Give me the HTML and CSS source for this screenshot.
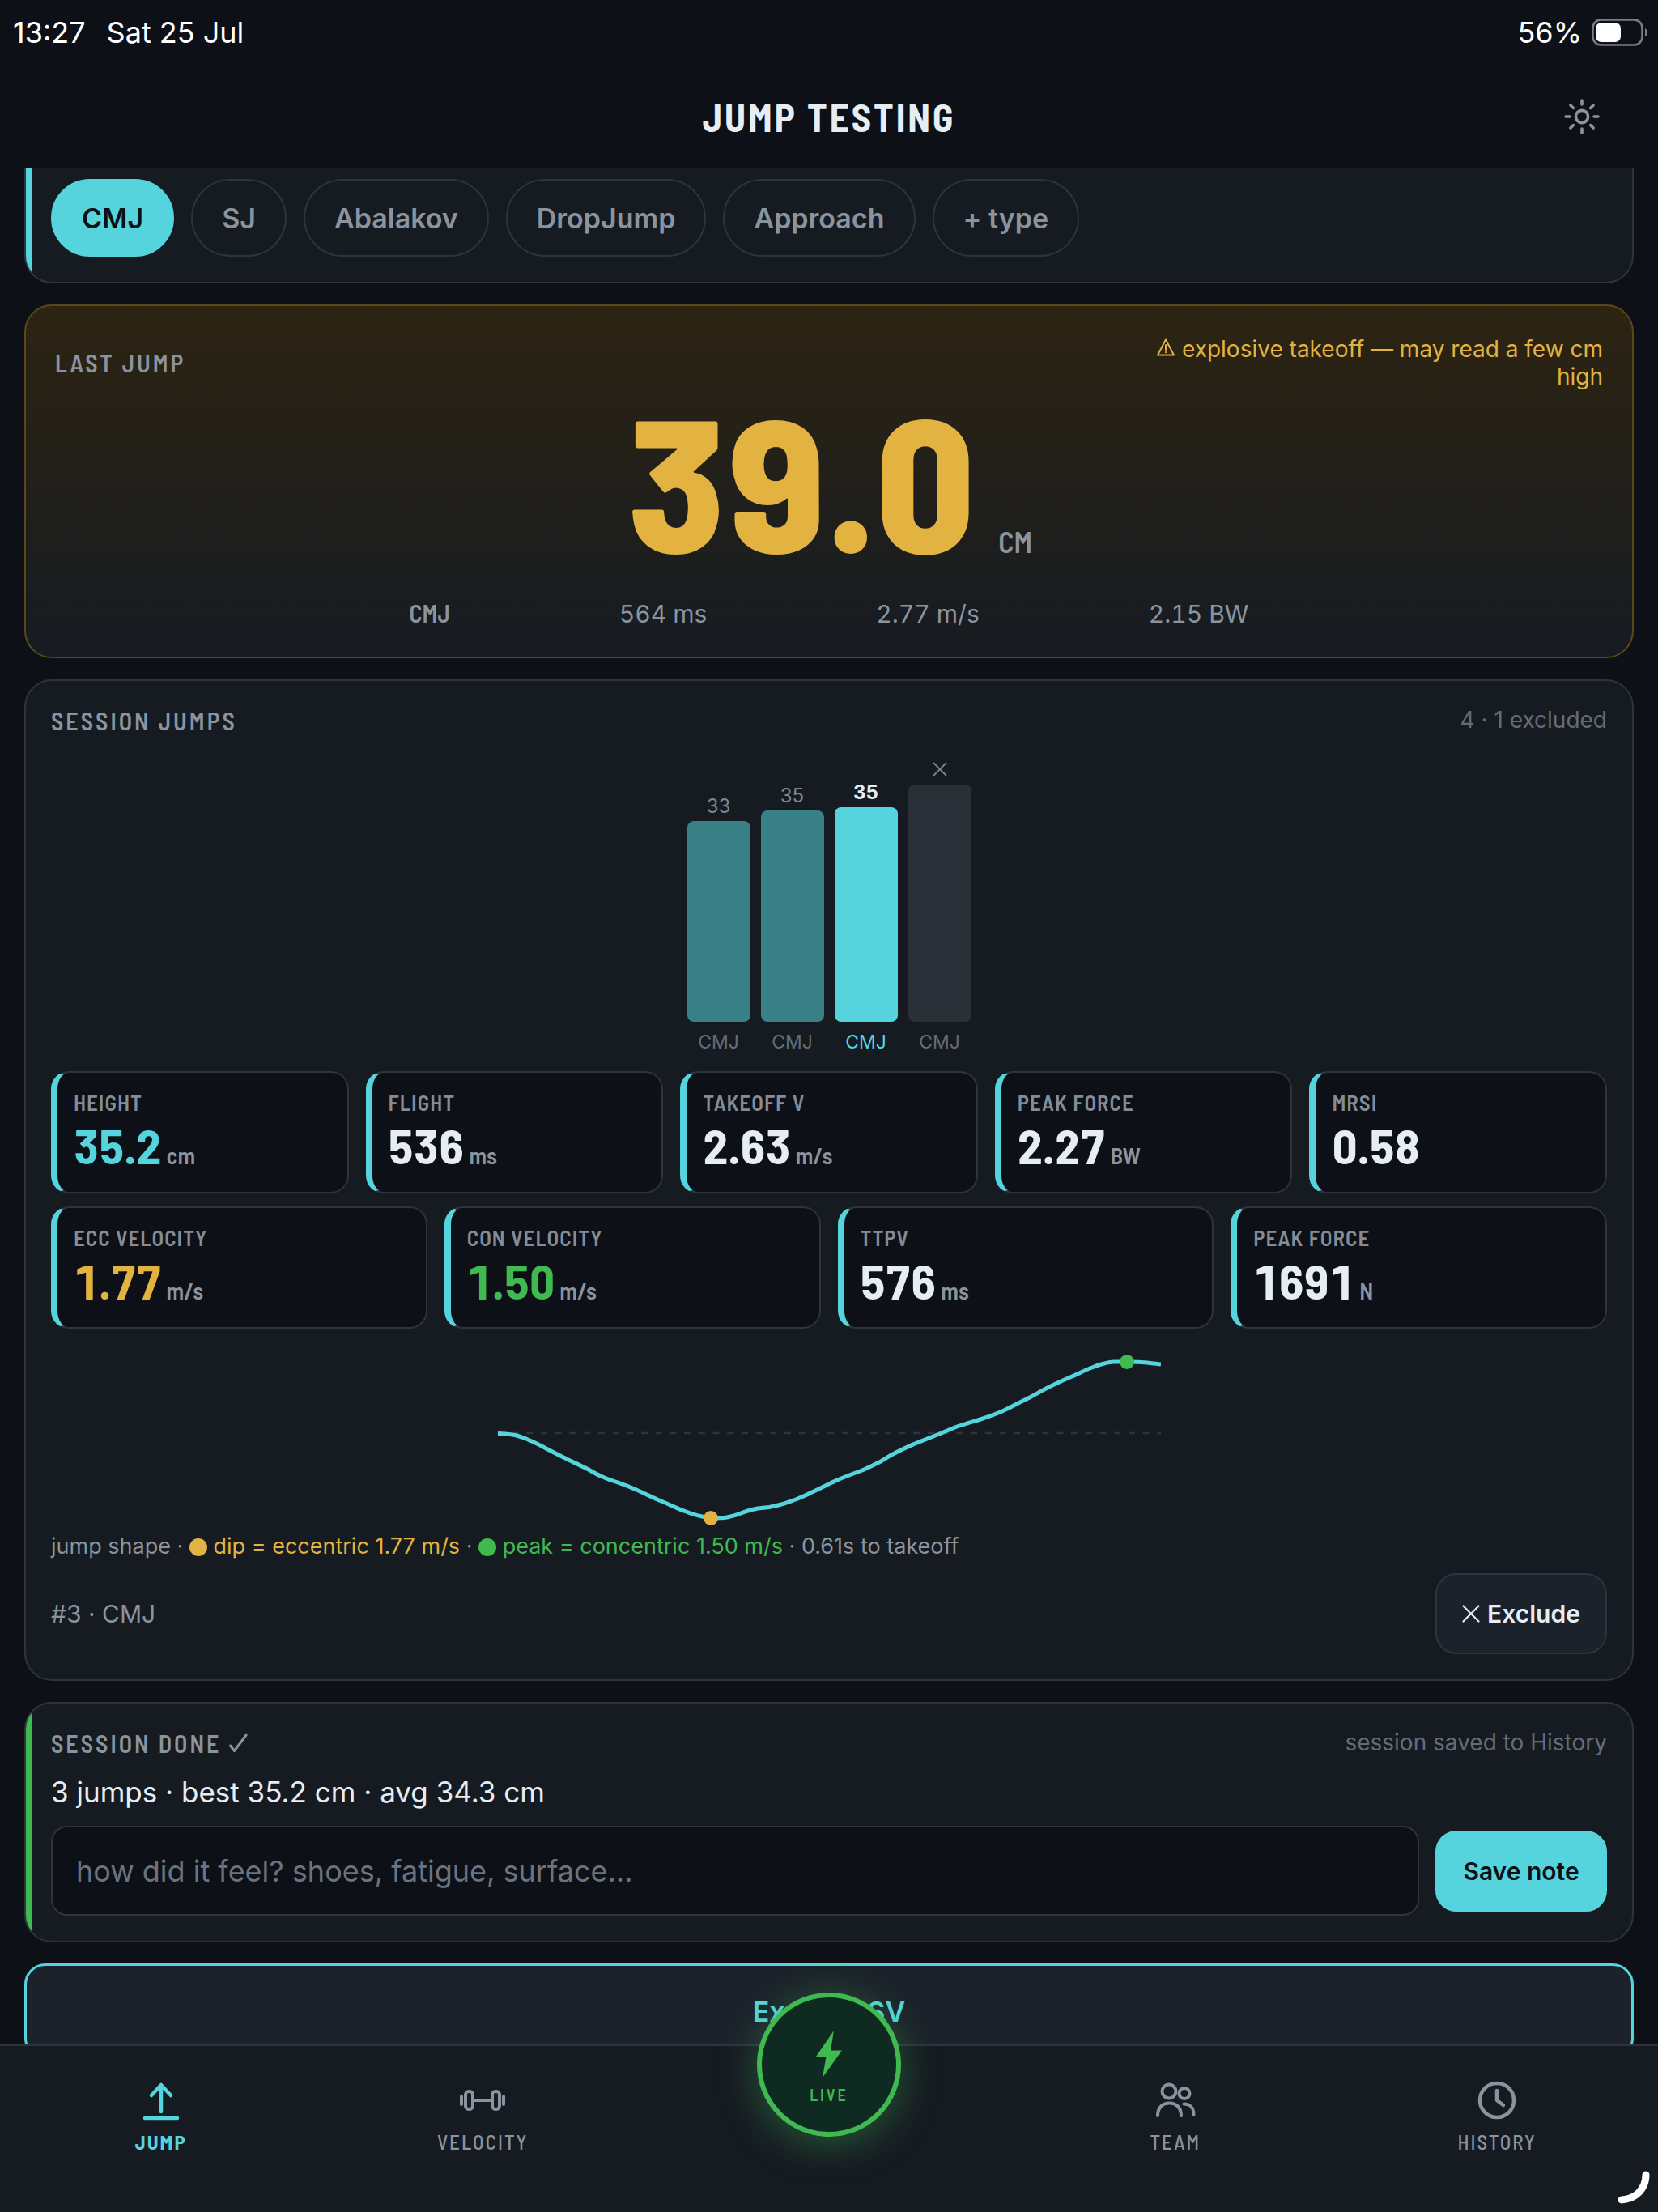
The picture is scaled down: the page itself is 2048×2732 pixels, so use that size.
FILE: index.html
```html
<!DOCTYPE html>
<html lang="en">
<head>
    <meta charset="UTF-8">
    <meta name="viewport" content="width=device-width, initial-scale=1.0">
    <title>Jump Testing</title>
    <link rel="stylesheet" href="styles.css">
</head>
<body>
    <header class="header">
        <div class="status">
            <span>13:27</span>
            <span>Sat 25 Jul</span>
            <span class="battery-text">56%</span>
            <svg class="battery" viewBox="0 0 70 34" aria-hidden="true">
                <rect x="1.5" y="1.5" width="61" height="31" rx="10" fill="none" stroke="#7b7e82" stroke-width="2.5"/>
                <rect x="5" y="5" width="31" height="24" rx="7" fill="#fff"/>
                <path d="M66 12c4 2 4 8 0 10z" fill="#7b7e82"/>
            </svg>
        </div>
        <div class="titlebar">
            <h1>JUMP TESTING</h1>
            <button class="theme" aria-label="Theme">
                <svg viewBox="0 0 44 44" fill="none" stroke="#8b949e" stroke-width="3.6" stroke-linecap="round">
                    <circle cx="22" cy="22" r="7.6"/>
                    <path d="M22 2v5M22 37v5M2 22h5M37 22h5M7.9 7.9l3.5 3.5M32.6 32.6l3.5 3.5M7.9 36.1l3.5-3.5M32.6 11.4l3.5-3.5"/>
                </svg>
            </button>
        </div>
    </header>

    <main class="content">
        <section class="card types">
            <button class="pill active">CMJ</button>
            <button class="pill">SJ</button>
            <button class="pill">Abalakov</button>
            <button class="pill">DropJump</button>
            <button class="pill">Approach</button>
            <button class="pill">+ type</button>
        </section>

        <section class="card last">
            <div class="last-head">
                <h2>LAST JUMP</h2>
                <p class="warn">
                    <svg class="warn-icon" viewBox="0 0 24 24" fill="none" stroke="#e3b341" stroke-width="2" stroke-linejoin="round" stroke-linecap="round"><path d="M12 2.5L22 21.5H2zM12 9v6M12 18v.3"/></svg>
                    explosive takeoff — may read a few cm high
                </p>
            </div>
            <div class="big"><span class="big-num">39.0</span><span class="big-unit">CM</span></div>
            <div class="last-stats">
                <b>CMJ</b>
                <span>564 ms</span>
                <span>2.77 m/s</span>
                <span>2.15 BW</span>
            </div>
        </section>

        <section class="card">
            <div class="card-head">
                <h2>SESSION JUMPS</h2>
                <span class="note">4 · 1 excluded</span>
            </div>

            <div class="bars">
                <div class="bar-col"><span class="bar-val">33</span><div class="bar" style="height:248px"></div><span class="bar-lbl">CMJ</span></div>
                <div class="bar-col"><span class="bar-val">35</span><div class="bar" style="height:261px"></div><span class="bar-lbl">CMJ</span></div>
                <div class="bar-col selected"><span class="bar-val">35</span><div class="bar" style="height:265px"></div><span class="bar-lbl">CMJ</span></div>
                <div class="bar-col excluded">
                    <span class="bar-val"><svg class="x-small" viewBox="0 0 18 18" fill="none" stroke="#7d8590" stroke-width="1.8" stroke-linecap="round"><path d="M1.5 1.5l15 15M16.5 1.5l-15 15"/></svg></span>
                    <div class="bar" style="height:293px"></div><span class="bar-lbl">CMJ</span>
                </div>
            </div>

            <div class="tiles five">
                <div class="tile"><div class="tile-lbl">HEIGHT</div><div class="tile-val cyan">35.2<small>cm</small></div></div>
                <div class="tile"><div class="tile-lbl">FLIGHT</div><div class="tile-val">536<small>ms</small></div></div>
                <div class="tile"><div class="tile-lbl">TAKEOFF V</div><div class="tile-val">2.63<small>m/s</small></div></div>
                <div class="tile"><div class="tile-lbl">PEAK FORCE</div><div class="tile-val">2.27<small>BW</small></div></div>
                <div class="tile"><div class="tile-lbl">MRSI</div><div class="tile-val">0.58</div></div>
            </div>
            <div class="tiles four">
                <div class="tile"><div class="tile-lbl">ECC VELOCITY</div><div class="tile-val gold">1.77<small>m/s</small></div></div>
                <div class="tile"><div class="tile-lbl">CON VELOCITY</div><div class="tile-val green">1.50<small>m/s</small></div></div>
                <div class="tile"><div class="tile-lbl">TTPV</div><div class="tile-val">576<small>ms</small></div></div>
                <div class="tile"><div class="tile-lbl">PEAK FORCE</div><div class="tile-val">1691<small>N</small></div></div>
            </div>

            <svg class="curve" viewBox="0 0 820 224" fill="none">
                <path d="M1 108H820" stroke="#2d3440" stroke-width="2.5" stroke-dasharray="8 9.7"/>
                <path d="M1 108.5C8 108.5 13 109 19 110C25 111 31 113 37 115.5C43 118 49 121 55 124C64 129 72 133 81 137.5C92 143 103 148 113 153C118 156 123 159 128 161C134 164 140 166 146 168C155 171 163 174 172 178C181 182 189 186 198 190C208 194 218 199 228 203C236 206 243 209 251 210.5C256 212 260 212.5 264 212.5C270 213 275 213 281 212.5C286 212 290 210.5 294 209.5C299 208 303 206 307 205C312 203 317 202 322 201C327 200.5 332 200 336 199.5C341 198.5 346 197.5 351 196C357 194.5 363 192 369 190C375 187.5 381 185 387 182C398 177 407 172 418 167C429 162 440 158 451 154C459 150.5 466 147 474 143C479 140 484 136.5 489 134C498 129 506 125.5 515 121.5C525 117.5 535 113.5 545 109.5C554 106 562 102 571 99C580 96 589 93.5 597 91C606 88 615 85 624 81C635 76 645 70 656 65C666 60 675 54 685 49.5C693 45.5 701 42 709 38.5C718 35 726 30 735 27C740 25 745 23 750 22C754 21 758 20 762 20C767 20 772 20 778 20C785 20 792 20 800 20.7C807 21.5 813 22 820 23" stroke="#56d4dd" stroke-width="5" stroke-linejoin="round"/>
                <circle cx="264" cy="213" r="9" fill="#e3b341"/>
                <circle cx="778" cy="20" r="9" fill="#3fb950"/>
            </svg>

            <p class="legend">jump shape · <span class="gold"><i class="dot"></i> dip = eccentric 1.77 m/s</span> · <span class="green"><i class="dot"></i> peak = concentric 1.50 m/s</span> · 0.61s to takeoff</p>

            <div class="row">
                <span class="jump-id">#3 · CMJ</span>
                <button class="btn"><svg class="x-btn" viewBox="0 0 22 22" fill="none" stroke="#e6edf3" stroke-width="2.2" stroke-linecap="round"><path d="M1.5 1.5l19 19M20.5 1.5l-19 19"/></svg>Exclude</button>
            </div>
        </section>

        <section class="card done">
            <div class="card-head">
                <h2>SESSION DONE <svg class="check" viewBox="0 0 24 24" fill="none" stroke="#8b949e" stroke-width="3" stroke-linecap="round" stroke-linejoin="round"><path d="M2.5 15l5 6.5L22 2"/></svg></h2>
                <span class="note">session saved to History</span>
            </div>
            <p class="summary">3 jumps · best 35.2 cm · avg 34.3 cm</p>
            <div class="row note-row">
                <input class="note-input" type="text" aria-label="Session note" placeholder="how did it feel? shoes, fatigue, surface...">
                <button class="btn primary">Save note</button>
            </div>
        </section>

        <button class="export">Export CSV</button>
    </main>

    <nav class="nav">
        <a class="tab current" href="#jump">
            <svg viewBox="0 0 56 56" fill="none" stroke="currentColor" stroke-width="4.5" stroke-linecap="round" stroke-linejoin="round"><path d="M28 42V10M16 22L28 9l12 13M8 50h40"/></svg>
            JUMP
        </a>
        <a class="tab" href="#velocity">
            <svg viewBox="0 0 56 56" fill="none" stroke="currentColor" stroke-width="4" stroke-linecap="round"><rect x="7" y="17" width="9" height="22" rx="4"/><rect x="40" y="17" width="9" height="22" rx="4"/><path d="M18 28h20M2 23v10M54 23v10"/></svg>
            VELOCITY
        </a>
        <div class="live-slot">
            <button class="live">
                <svg viewBox="0 0 32 58" fill="#3fb950"><path d="M22 0L0 32h12.5L8 58l24-33.5H18z"/></svg>
                LIVE
            </button>
        </div>
        <a class="tab" href="#team">
            <svg viewBox="0 0 56 56" fill="none" stroke="currentColor" stroke-width="4" stroke-linecap="round"><circle cx="20" cy="17" r="8.5"/><circle cx="39" cy="19.5" r="6.5"/><path d="M6 47c0-10 6-15.5 14.5-15.5S35 37 35 47M38.5 32.5c7 0 12 4.5 12 13"/></svg>
            TEAM
        </a>
        <a class="tab" href="#history">
            <svg viewBox="0 0 56 56" fill="none" stroke="currentColor" stroke-width="4.5" stroke-linecap="round" stroke-linejoin="round"><circle cx="28" cy="28" r="21"/><path d="M28 16v12l8 6"/></svg>
            HISTORY
        </a>
        <svg class="corner" viewBox="0 0 42 42" fill="none" stroke="#fff" stroke-width="9" stroke-linecap="round"><path d="M36 5C36 22 24 35 6 36"/></svg>
    </nav>
</body>
</html>
```
FILE: styles.css
```css
:root {
    --bg: #0d1117;
    --card: #161b22;
    --line: #2d343f;
    --text: #e6edf3;
    --muted: #8b949e;
    --dim: #646c77;
    --cyan: #56d4dd;
    --gold: #e3b341;
    --green: #3fb950;
    --cond: "Barlow Semi Condensed", "Barlow Condensed", "Roboto Condensed", sans-serif;
}
* {
    box-sizing: border-box;
    margin: 0;
    padding: 0;
}
body {
    display: flex;
    flex-direction: column;
    height: 100vh;
    overflow: hidden;
    background: var(--bg);
    color: var(--text);
    font-family: Inter, sans-serif;
    font-size: 30px;
    line-height: 36px;
}
button {
    font-family: inherit;
    cursor: pointer;
}
svg {
    flex: none;
}

/* header */
.header {
    flex: none;
    padding-bottom: 35px;
}
.status {
    display: flex;
    align-items: center;
    gap: 26px;
    padding: 18px 12px 0 16px;
    color: #fff;
    font-size: 36px;
    line-height: 44px;
}
.battery-text {
    margin-left: auto;
}
.battery {
    width: 70px;
    height: 34px;
    margin-left: -14px;
}
.titlebar {
    display: grid;
    grid-template-columns: 1fr auto 1fr;
    align-items: center;
    padding: 54px 72px 0;
}
h1 {
    grid-column: 2;
    font-family: var(--cond);
    font-size: 47px;
    font-weight: 700;
    line-height: 56px;
    letter-spacing: 3px;
}
.theme {
    justify-self: end;
    height: 44px;
    border: 0;
    background: none;
}
.theme svg {
    display: block;
    width: 44px;
    height: 44px;
}

/* cards */
.content {
    flex: 1;
    display: flex;
    flex-direction: column;
    gap: 26px;
    min-height: 0;
    overflow: hidden;
    padding: 0 30px;
}
.card {
    flex: none;
    padding: 31px;
    background: var(--card);
    border: 2px solid var(--line);
    border-radius: 34px;
}
h2 {
    font-family: var(--cond);
    font-size: 30px;
    font-weight: 600;
    line-height: 36px;
    letter-spacing: 3px;
    color: var(--muted);
}
.card-head,
.last-head,
.row {
    display: flex;
    justify-content: space-between;
}
.note {
    color: var(--dim);
    font-size: 28px;
    line-height: 34px;
}
.types {
    display: flex;
    gap: 21px;
    padding-top: 14px;
    border-top: 0;
    border-radius: 0 0 34px 34px;
    background: linear-gradient(90deg, var(--cyan) 8px, var(--card) 8px);
}
.pill {
    height: 96px;
    padding: 0 36px;
    border: 2px solid var(--line);
    border-radius: 48px;
    background: none;
    color: var(--muted);
    font-size: 34px;
    font-weight: 600;
}
.pill.active {
    background: var(--cyan);
    border-color: var(--cyan);
    color: var(--bg);
}

/* last jump */
.last {
    padding: 36px 36px 35px;
    background: linear-gradient(#2d2412, #161b22);
    border-color: #5c4718;
}
.last-head {
    align-items: center;
}
.warn {
    max-width: 30%;
    color: var(--gold);
    font-size: 28px;
    line-height: 34px;
    text-align: right;
}
.warn-icon {
    width: 24px;
    height: 24px;
}
.big {
    display: flex;
    justify-content: center;
    align-items: baseline;
    gap: 28px;
    margin-top: 2px;
    font-family: var(--cond);
}
.big-num {
    color: var(--gold);
    font-size: 233px;
    font-weight: 800;
    font-variant-numeric: tabular-nums;
    line-height: 212px;
}
.big-unit {
    color: var(--muted);
    font-size: 36px;
    font-weight: 600;
    line-height: 40px;
}
.last-stats {
    display: flex;
    justify-content: center;
    align-items: baseline;
    gap: 209px;
    margin-top: 43px;
    color: var(--muted);
    font-variant-numeric: tabular-nums;
}
.last-stats b {
    font-family: var(--cond);
    font-weight: 600;
}

/* session bars */
.bars {
    display: flex;
    justify-content: center;
    align-items: flex-end;
    gap: 13px;
    margin: 29px 0 22px;
    font-size: 24px;
    line-height: 28px;
    text-align: center;
}
.bar-col {
    display: flex;
    flex-direction: column;
    width: 78px;
}
.bar-val {
    margin-bottom: 4px;
    color: #7d8590;
}
.bar {
    margin-bottom: 11px;
    border-radius: 8px;
    background: #3a8087;
}
.bar-lbl {
    color: var(--dim);
    font-size: 23px;
}
.selected .bar {
    background: var(--cyan);
}
.selected .bar-val {
    color: var(--text);
    font-weight: 700;
}
.selected .bar-lbl {
    color: var(--cyan);
}
.excluded .bar {
    background: #2a3038;
}
.x-small {
    width: 18px;
    height: 18px;
}

/* metric tiles */
.tiles {
    display: grid;
    gap: 21px;
}
.five {
    grid-template-columns: repeat(5, 1fr);
}
.four {
    grid-template-columns: repeat(4, 1fr);
    margin-top: 16px;
}
.tile {
    padding: 20px 20px 27px;
    background: var(--bg);
    border: 2px solid var(--line);
    border-left: 8px solid var(--cyan);
    border-radius: 22px;
    font-family: var(--cond);
}
.tile-lbl {
    margin-bottom: 7px;
    color: #858c96;
    font-size: 27px;
    font-weight: 600;
    line-height: 32px;
    letter-spacing: 1px;
}
.tile-val {
    font-size: 60px;
    font-weight: 700;
    font-variant-numeric: tabular-nums;
    line-height: 61px;
}
.tile-val small {
    margin-left: 6px;
    color: var(--muted);
    font-size: 29px;
    font-weight: 600;
    line-height: 29px;
}
.cyan { color: var(--cyan); }
.gold { color: var(--gold); }
.green { color: var(--green); }

.curve {
    display: block;
    width: 820px;
    max-width: 100%;
    margin: 21px auto 6px;
}
.legend {
    color: var(--muted);
    font-size: 27px;
}
.dot {
    display: inline-block;
    width: 22px;
    height: 22px;
    border-radius: 50%;
    background: currentColor;
    vertical-align: -3px;
}
.row {
    align-items: center;
    gap: 20px;
    margin-top: 15px;
}
.jump-id {
    color: var(--muted);
}
.btn {
    display: flex;
    flex: none;
    align-items: center;
    justify-content: center;
    gap: 9px;
    min-width: 212px;
    height: 100px;
    padding: 0 30px;
    border: 2px solid var(--line);
    border-radius: 26px;
    background: #1c222b;
    color: var(--text);
    font-size: 30px;
    font-weight: 600;
}
.x-btn {
    width: 22px;
    height: 22px;
}
.btn.primary {
    background: var(--cyan);
    border-color: var(--cyan);
    color: var(--bg);
}

/* session done */
.done {
    background: linear-gradient(90deg, var(--green) 8px, var(--card) 8px);
}
.check {
    width: 24px;
    height: 24px;
}
.summary {
    margin-top: 20px;
    font-size: 35px;
    line-height: 44px;
}
.note-row {
    margin-top: 20px;
}
.note-input {
    flex: 1;
    min-width: 0;
    height: 111px;
    padding: 0 29px;
    border: 2px solid var(--line);
    border-radius: 20px;
    background: var(--bg);
    color: var(--text);
    font-family: inherit;
    font-size: 36px;
}
.note-input::placeholder {
    color: #6b737e;
    opacity: 1;
}
.export {
    flex: none;
    height: 118px;
    border: 3px solid var(--cyan);
    border-radius: 26px;
    background: #1c222b;
    color: var(--cyan);
    font-size: 34px;
    font-weight: 600;
}

/* bottom nav */
.nav {
    position: relative;
    flex: none;
    display: flex;
    height: 208px;
    border-top: 3px solid var(--line);
    background: var(--card);
}
.tab {
    flex: 1;
    display: flex;
    flex-direction: column;
    align-items: center;
    gap: 8px;
    padding-top: 39px;
    color: var(--muted);
    font-family: var(--cond);
    font-size: 25px;
    font-weight: 500;
    line-height: 30px;
    letter-spacing: 2px;
    text-decoration: none;
}
.tab svg {
    width: 56px;
    height: 56px;
}
.tab.current {
    color: var(--cyan);
    font-weight: 700;
}
.live-slot {
    flex: 0 0 458px;
    display: flex;
    justify-content: center;
}
.live {
    display: flex;
    flex-direction: column;
    align-items: center;
    gap: 8px;
    width: 178px;
    height: 178px;
    margin-top: -66px;
    padding-top: 41px;
    border: 6px solid var(--green);
    border-radius: 50%;
    background: #0f2a21;
    box-shadow: 0 8px 48px rgba(63, 185, 80, 0.4);
    color: var(--green);
    font-family: var(--cond);
    font-size: 20px;
    font-weight: 600;
    line-height: 26px;
    letter-spacing: 3px;
}
.live svg {
    width: 32px;
    height: 58px;
}
.corner {
    position: absolute;
    right: 9px;
    bottom: 9px;
    width: 42px;
    height: 42px;
}
```
